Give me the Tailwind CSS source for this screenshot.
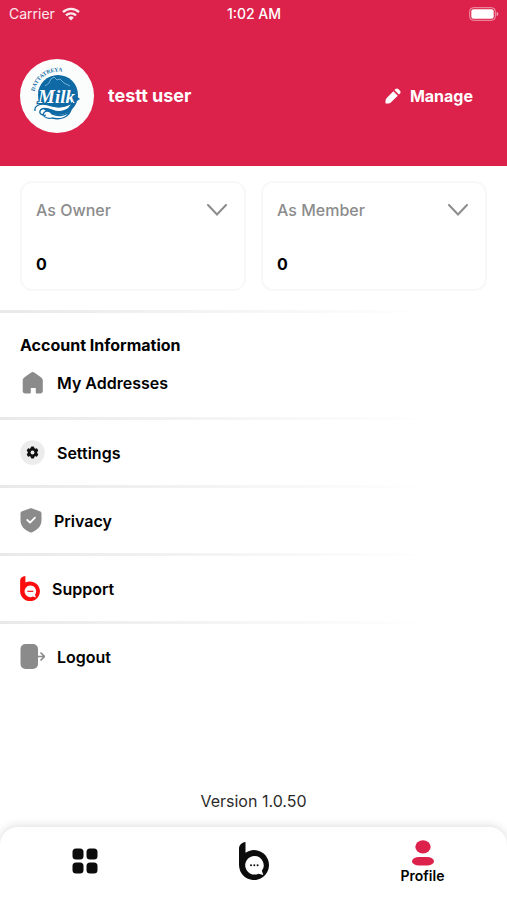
<!DOCTYPE html>
<html lang="en">
<head>
    <meta charset="UTF-8">
    <meta name="viewport" content="width=device-width, initial-scale=1.0">
    <title>Profile</title>
    <script src="https://cdn.jsdelivr.net/npm/@tailwindcss/browser@4"></script>
</head>
<body class="bg-white text-black font-['Inter','Liberation_Sans',sans-serif] min-h-screen flex flex-col">

    <!-- Header -->
    <header class="bg-[#dc224b] text-white">
        <div class="grid grid-cols-3 items-center h-7 pl-[9px] pr-2 text-sm">
            <div class="flex items-center gap-[6px] text-white/90">
                <span>Carrier</span>
                <svg class="w-[20px] h-[14px]" viewBox="0 0 18 14" fill="none" stroke="currentColor" stroke-width="2.4">
                    <path d="M1 5.2a11.4 11.4 0 0 1 16 0"/>
                    <path d="M4 8.4a7.2 7.2 0 0 1 10 0"/>
                    <path d="M9 13.5 6.2 10.7a4 4 0 0 1 5.6 0z" fill="currentColor" stroke="none"/>
                </svg>
            </div>
            <div class="text-center font-medium">1:02 AM</div>
            <svg class="w-[30px] h-[14px] justify-self-end" viewBox="0 0 30 14">
                <rect x=".7" y=".7" width="25.6" height="12.6" rx="3.6" fill="none" stroke="#fff" stroke-opacity=".55"/>
                <rect x="2.3" y="2.3" width="22.4" height="9.4" rx="2.2" fill="#fff"/>
                <path d="M27.6 5v4c1-.4 1.7-1.1 1.7-2s-.7-1.6-1.7-2z" fill="#fff" fill-opacity=".6"/>
            </svg>
        </div>
        <div class="flex items-center h-[138px] pl-5 pr-[34px] pb-[2px]">
            <svg class="w-[74px] h-[74px] mr-[14px]" viewBox="0 0 74 74" role="img" aria-label="Dattatreya Milk">
                <circle cx="37" cy="37" r="37" fill="#fbfdfd"/>
                <circle cx="38" cy="36" r="20" fill="#0e69a5"/>
                <path d="M25 27l4-3 2-4 3-2 3 3 3-1 4 4 6 3" fill="none" stroke="#8fc1e0" stroke-width=".8"/>
                <path id="arc" d="M14.500 32.500A24.500 24.500 0 0 1 46 13.500" fill="none"/>
                <text font-size="5.600" font-weight="700" font-family="Liberation Serif, serif" fill="#0e69a5"><textPath href="#arc">DATTATREYA</textPath></text>
                <path d="M54 35l6 5-6 4z" fill="#0e69a5"/>
                <text x="18" y="43.500" font-size="19" font-weight="700" font-style="italic" font-family="Liberation Serif, serif" fill="#fff" stroke="#0e69a5" stroke-width="2.500" paint-order="stroke">Milk</text>
                <path d="M15 52c-1-6 6-8 13-6s14 4 24-2c-3 9-13 10-20 7-6-2-11-2-12 1s3 5 6 4M23 56c1-5 7-5 9-1 6 3 14 2 19-4-3 8-11 10-19 8-3 1-7 0-9-3z" fill="#fff" stroke="#0e69a5" stroke-width="1.300"/>
            </svg>
            <h1 class="text-lg font-bold">testt user</h1>
            <button class="ml-auto flex items-center gap-[9px] text-base font-bold">
                <svg class="w-4 h-4" viewBox="0 0 16 16" fill="currentColor">
                    <path d="M.5 13.500c0-1.500.2-2.500 1-3.300L8.300 3.200l4.500 4.500-7 6.800c-.8.800-1.800 1-3.300 1h-2zM9.400 2.100l1.100-1.100c.8-.8 2-.8 2.800 0l1.700 1.700c.8.800.8 2 0 2.800l-1.100 1.100z"/>
                </svg>
                Manage
            </button>
        </div>
    </header>

    <main>
        <!-- Owner / member totals -->
        <div class="grid grid-cols-2 gap-[15px] px-5 pt-[15px] pb-[19px]">
            <button class="h-[110px] border-2 border-[#f8f8f8] rounded-xl px-[14px] pt-[15px] pb-[13px] flex flex-col justify-between text-left">
                <span class="w-full flex items-center justify-between pr-[2px] text-base text-[#8c8c8c] font-medium">
                    As Owner
                    <svg class="w-[22px] h-3" viewBox="0 0 22 12" fill="none" stroke="#8c8c8c" stroke-width="2" stroke-linecap="round"><path d="M2 1l9 9.500L20 1"/></svg>
                </span>
                <span class="text-base font-bold">0</span>
            </button>
            <button class="h-[110px] border-2 border-[#f8f8f8] rounded-xl px-[14px] pt-[15px] pb-[13px] flex flex-col justify-between text-left">
                <span class="w-full flex items-center justify-between pr-[2px] text-base text-[#8c8c8c] font-medium">
                    As Member
                    <svg class="w-[22px] h-3" viewBox="0 0 22 12" fill="none" stroke="#8c8c8c" stroke-width="2" stroke-linecap="round"><path d="M2 1l9 9.500L20 1"/></svg>
                </span>
                <span class="text-base font-bold">0</span>
            </button>
        </div>

        <!-- Account menu -->
        <div class="h-[3px] bg-linear-to-r from-[#e9e9e9] to-white to-85%"></div>
        <h2 class="px-5 pt-5 text-base font-bold">Account Information</h2>
        <nav>
            <a href="#" class="flex items-center h-[60px] pb-2 px-5 gap-3 text-base font-semibold">
                <svg class="w-[25px] h-6" viewBox="0 0 25 24" fill="#8b8b8b">
                    <path d="M11.200 1.600c.9-.7 2.100-.7 3 0l6.700 4.600c1.100.8 1.900 1.900 1.900 3.100V20c0 1.500-1 2.500-2.500 2.500h-3.500c-.7 0-1-.4-1-1V17h-5v4.500c0 .6-.4 1-1 1H5.200c-1.500 0-2.500-1-2.500-2.500V9.300c0-1.200.7-2.300 1.800-3.100z"/>
                </svg>
                My Addresses
            </a>
            <div class="h-[3px] bg-linear-to-r from-[#e9e9e9] to-white to-85%"></div>
            <a href="#" class="flex items-center h-[65px] px-5 gap-3 text-base font-semibold">
                <svg class="w-[25px] h-[25px]" viewBox="0 0 25 25">
                    <circle cx="12.500" cy="12.500" r="12.300" fill="#ececec"/>
                    <g transform="translate(12.500 12.500)" fill="#111">
                        <circle r="4.700"/>
                        <rect x="-1.700" y="-6" width="3.400" height="12" rx="1"/>
                        <rect x="-1.700" y="-6" width="3.400" height="12" rx="1" transform="rotate(60)"/>
                        <rect x="-1.700" y="-6" width="3.400" height="12" rx="1" transform="rotate(120)"/>
                        <circle r="1.900" fill="#ececec"/>
                    </g>
                </svg>
                Settings
            </a>
            <div class="h-[3px] bg-linear-to-r from-[#e9e9e9] to-white to-85%"></div>
            <a href="#" class="flex items-center h-[65px] px-5 gap-3 text-base font-semibold">
                <svg class="w-[22px] h-[25px]" viewBox="0 0 22 25">
                    <path d="M9.800.5c.8-.3 1.600-.3 2.400 0l7.600 2.700c1.100.4 1.700 1.200 1.700 2.300V12c0 6-3.500 9.600-9.500 12.300-.7.300-1.300.3-2 0C4 21.600.5 18 .5 12V5.500c0-1.100.6-1.900 1.700-2.300z" fill="#8b8b8b"/>
                    <path d="M7.300 12l2.700 2.700 5-5" fill="none" stroke="#fff" stroke-width="1.800" stroke-linecap="round" stroke-linejoin="round"/>
                </svg>
                Privacy
            </a>
            <div class="h-[3px] bg-linear-to-r from-[#e9e9e9] to-white to-85%"></div>
            <a href="#" class="flex items-center h-[65px] px-5 gap-3 text-base font-semibold">
                <svg class="w-5 h-[25px]" viewBox="0 0 30 38">
                    <path d="M0 7C0 3 3 .5 8 0v10a15 15 0 1 1-8 13z" fill="#fb0d0d"/>
                    <path d="M15.500 14.500a8.800 8.800 0 1 0 3.800 16.700l4.700 1.300-1.400-4a8.800 8.800 0 0 0-7.100-14z" fill="#fff"/>
                    <path d="M11 23.300h9" stroke="#fb0d0d" stroke-width="1.800"/>
                </svg>
                Support
            </a>
            <div class="h-[3px] bg-linear-to-r from-[#e9e9e9] to-white to-85%"></div>
            <a href="#" class="flex items-center h-[65px] px-5 gap-3 text-base font-semibold">
                <svg class="w-[25px] h-[25px]" viewBox="0 0 25 25">
                    <rect x=".5" width="17.500" height="25" rx="5" fill="#8b8b8b"/>
                    <path d="M17 12.500h7M20.500 8.500l4 4-4 4" fill="none" stroke="#8b8b8b" stroke-width="1.600"/>
                </svg>
                Logout
            </a>
        </nav>
    </main>

    <footer class="mt-auto">
        <p class="text-center text-base text-[#2b2b2b] pb-[14px]">Version 1.0.50</p>

        <!-- Bottom tabs -->
        <nav class="grid grid-cols-3 items-center h-[73px] bg-white rounded-t-[18px] shadow-[0_-1px_10px_rgba(0,0,0,0.14)]">
            <a href="#" aria-label="Dashboard" class="flex justify-center pb-[6px]">
                <svg class="w-[26px] h-[26px]" viewBox="0 0 26 26" fill="#0c0c0c">
                    <rect x=".5" y=".5" width="11" height="11" rx="3.500"/>
                    <rect x="14.500" y=".5" width="11" height="11" rx="3.500"/>
                    <rect x=".5" y="14.500" width="11" height="11" rx="3.500"/>
                    <rect x="14.500" y="14.500" width="11" height="11" rx="3.500"/>
                </svg>
            </a>
            <a href="#" aria-label="Home" class="flex justify-center pb-[6px]">
                <svg class="w-[30px] h-[38px]" viewBox="0 0 30 38">
                    <path d="M0 7C0 3 2.500.5 6.500 0v10.700a15 15 0 1 1-6.500 12.300z" fill="#0c0c0c"/>
                    <path d="M15.500 14a9.300 9.300 0 1 0 4 17.700l4.800 1.300-1.400-4.200a9.300 9.300 0 0 0-7.400-14.800z" fill="#fff"/>
                    <g fill="#0c0c0c"><circle cx="12" cy="23.300" r="1"/><circle cx="15.300" cy="23.300" r="1"/><circle cx="18.600" cy="23.300" r="1"/></g>
                </svg>
            </a>
            <a href="#" class="flex flex-col items-center gap-[2px] text-sm leading-4 font-semibold pb-1">
                <svg class="w-[22px] h-[26px]" viewBox="0 0 22 26" fill="#dc224b">
                    <ellipse cx="11" cy="6.800" rx="7.700" ry="6.600"/>
                    <rect y="17" width="22" height="8.600" rx="7" ry="4.300"/>
                </svg>
                Profile
            </a>
        </nav>
    </footer>
</body>
</html>
